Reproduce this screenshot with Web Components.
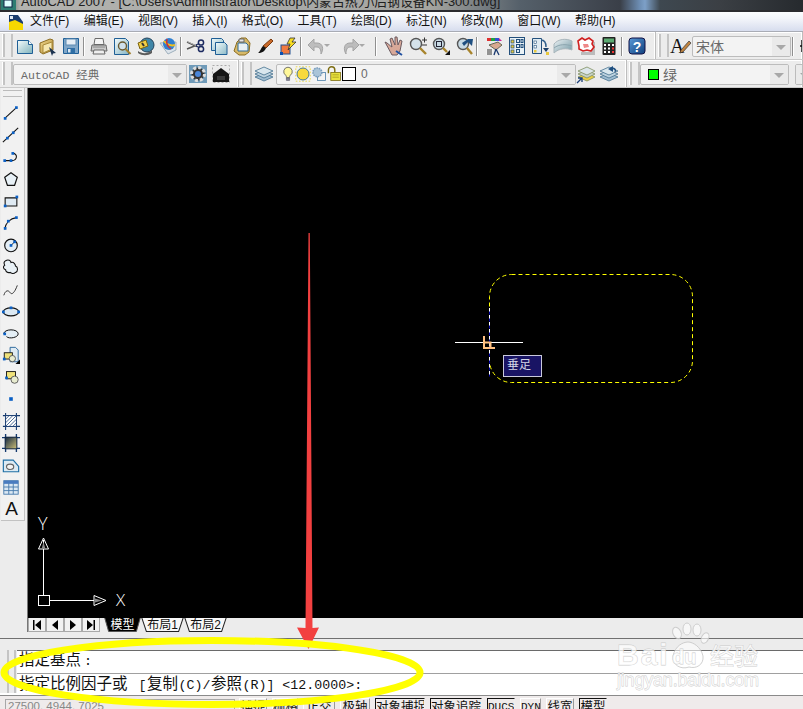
<!doctype html>
<html lang="zh">
<head>
<meta charset="utf-8">
<title>AutoCAD 2007</title>
<style>
  html, body { margin: 0; height: 100%; overflow: hidden; background: #ececec; }
</style>
</head>
<body>
<cad-app>
  <cad-titlebar>AutoCAD 2007 - [C:\Users\Administrator\Desktop\内蒙古热力\后钢设备KN-300.dwg]</cad-titlebar>
  <cad-menubar>
    <span>文件(F)</span><span>编辑(E)</span><span>视图(V)</span><span>插入(I)</span><span>格式(O)</span><span>工具(T)</span><span>绘图(D)</span><span>标注(N)</span><span>修改(M)</span><span>窗口(W)</span><span>帮助(H)</span>
  </cad-menubar>

  <cad-bar-row>
    <cad-toolbar style="width:656px">
      <cad-icon name="new"></cad-icon><cad-icon name="open"></cad-icon><cad-icon name="save"></cad-icon>
      <cad-sep></cad-sep>
      <cad-icon name="print"></cad-icon><cad-icon name="preview"></cad-icon><cad-icon name="publish"></cad-icon><cad-icon name="web"></cad-icon>
      <cad-sep></cad-sep>
      <cad-icon name="cut"></cad-icon><cad-icon name="copy"></cad-icon><cad-icon name="paste"></cad-icon><cad-icon name="brush"></cad-icon><cad-icon name="match"></cad-icon>
      <cad-sep></cad-sep>
      <cad-icon name="undo"></cad-icon><cad-icon name="drop" small></cad-icon><cad-icon name="redo"></cad-icon><cad-icon name="drop" small></cad-icon>
      <cad-sep></cad-sep>
      <cad-icon name="hand" style="margin:0 2px"></cad-icon><cad-icon name="zoomplus"></cad-icon><cad-icon name="zoomwin"></cad-icon><cad-icon name="zoomprev"></cad-icon>
      <cad-sep style="margin-right:5px"></cad-sep>
      <cad-icon name="props"></cad-icon><cad-icon name="center"></cad-icon><cad-icon name="palette"></cad-icon><cad-icon name="sheet"></cad-icon><cad-icon name="markup"></cad-icon><cad-icon name="calc"></cad-icon>
      <cad-sep></cad-sep>
      <cad-icon name="help"></cad-icon>
    </cad-toolbar>
    <cad-toolbar style="flex:1">
      <cad-icon name="textstyle" style="margin-left:-1px"></cad-icon>
      <cad-combo style="width:99px;margin-left:1px"><span style="font-size:14px">宋体</span></cad-combo>
      <cad-sep></cad-sep>
      <cad-icon name="dimstyle"></cad-icon>
    </cad-toolbar>
  </cad-bar-row>

  <cad-bar-row>
    <cad-toolbar style="width:239px">
      <cad-combo style="width:174px"><span style="font:11.5px 'Liberation Mono','Noto Sans CJK SC',monospace;padding-left:4px">AutoCAD 经典</span></cad-combo>
      <cad-icon name="gear" style="margin-left:-1px"></cad-icon><cad-icon name="house"></cad-icon>
    </cad-toolbar>
    <cad-toolbar style="width:388px">
      <cad-icon name="layers"></cad-icon>
      <cad-combo style="width:300px;margin-left:1px">
        <cad-icon name="bulb" tiny></cad-icon><cad-icon name="sun" tiny></cad-icon><cad-icon name="freeze" tiny></cad-icon><cad-icon name="lock" tiny></cad-icon>
        <span style="width:14px;height:14px;box-sizing:border-box;border:1px solid #000;background:#fff;margin:0 5px 0 0"></span>
        <span style="font-size:12px">0</span>
      </cad-combo>
      <cad-icon name="layerset" style="margin-left:-2px"></cad-icon><cad-icon name="layerprev"></cad-icon>
    </cad-toolbar>
    <cad-toolbar style="flex:1">
      <cad-combo style="width:149px">
        <span style="width:11px;height:11px;box-sizing:border-box;border:1px solid #000;background:#00ff00;margin:0 4px 0 4px"></span>
        <span style="font-size:14px">绿</span>
      </cad-combo>
      <cad-combo style="width:20px;margin-left:6px"></cad-combo>
    </cad-toolbar>
  </cad-bar-row>

  <cad-main>
    <cad-draw-tools>
      <cad-icon name="line" tool></cad-icon><cad-icon name="xline" tool></cad-icon><cad-icon name="pline" tool></cad-icon><cad-icon name="polygon" tool></cad-icon><cad-icon name="rect" tool></cad-icon><cad-icon name="arc" tool></cad-icon><cad-icon name="circle" tool></cad-icon><cad-icon name="cloud" tool></cad-icon><cad-icon name="spline" tool></cad-icon><cad-icon name="ellipse" tool></cad-icon><cad-icon name="ellarc" tool></cad-icon><cad-icon name="insert" tool></cad-icon><cad-icon name="block" tool></cad-icon><cad-icon name="point" tool></cad-icon><cad-icon name="hatch" tool></cad-icon><cad-icon name="gradient" tool></cad-icon><cad-icon name="region" tool></cad-icon><cad-icon name="table" tool></cad-icon>
      <span slot="last">A</span>
    </cad-draw-tools>
    <cad-workspace>
      <cad-model-space></cad-model-space>
      <cad-tabs>
        <cad-tab on>模型</cad-tab><cad-tab>布局1</cad-tab><cad-tab>布局2</cad-tab>
      </cad-tabs>
    </cad-workspace>
  </cad-main>

  <cad-command>
    <div><b>指定基点</b>:</div>
    <div><b class="lead">指定比例因子或</b> [<b class="gap">复制</b>(C)/<b class="gap">参照</b>(R)] &lt;12.0000&gt;:</div>
  </cad-command>

  <cad-status>
    <span slot="coords">27500, 4944, 7025</span>
    <cad-toggle style="width:28px">捕捉</cad-toggle>
    <cad-toggle style="width:26px">栅格</cad-toggle>
    <cad-toggle style="width:32px">正交</cad-toggle>
    <cad-toggle style="width:30px">极轴</cad-toggle>
    <cad-toggle on style="width:50px">对象捕捉</cad-toggle>
    <cad-toggle on style="width:52px">对象追踪</cad-toggle>
    <cad-toggle on style="width:28px" mono>DUCS</cad-toggle>
    <cad-toggle style="width:21px" mono>DYN</cad-toggle>
    <cad-toggle style="width:28px">线宽</cad-toggle>
    <cad-toggle on style="width:28px">模型</cad-toggle>
  </cad-status>

  <cad-watermark></cad-watermark>
  <cad-annotations></cad-annotations>
</cad-app>

<script>
const CJK = `"Liberation Sans", "Noto Sans CJK SC", sans-serif`;

// grip square used all over the draw toolbar
const grip = (x, y, s = 3) => `<rect x="${x - s / 2}" y="${y - s / 2}" width="${s}" height="${s}" fill="#0a5fc4"/>`;
const grad = (id, a, b) => `<defs><linearGradient id="${id}" x1="0" y1="0" x2="1" y2="1"><stop offset="0" stop-color="${a}"/><stop offset="1" stop-color="${b}"/></linearGradient></defs>`;

const ICONS = {
  new: grad("g", "#f4fbfb", "#7fb3bd") + `<path d="M2.5 4.5h11l4 4v9h-15z" fill="url(#g)" stroke="#1f5f96"/><path d="M13.5 4.5v4h4" fill="#fff" stroke="#1f5f96"/>`,
  open: grad("g", "#f0d890", "#b08a30") + `<path d="M2 7l10-4 3 1v10L5 18 2 16z" fill="url(#g)" stroke="#8d6d22"/><path d="M5 9l9-3v7l-9 4z" fill="#f6e7b0" stroke="#a98a3a"/><path d="M11 11l7 6-3 .5-1 2.5z" fill="#1c3350"/>`,
  save: `<path d="M2.5 2.5h15v15h-15z" fill="#7fa6c8" stroke="#1f5f96"/><rect x="5" y="3" width="10" height="6" fill="#e6eef5" stroke="#5f8bb2"/><rect x="6" y="12" width="8" height="5.5" fill="#2f6ea5"/><rect x="7" y="13" width="2.5" height="3.5" fill="#dce8f2"/>`,
  print: `<path d="M6 2.5h8l1 6H5z" fill="#f4f4f4" stroke="#6b6b6b"/><path d="M3 9h14l1 6H2z" fill="#c9c9c9" stroke="#666"/><path d="M5 14h10l1 4H4z" fill="#eee" stroke="#666"/><path d="M4 11h12" stroke="#888"/>`,
  preview: grad("g", "#f4fbfb", "#86b5c4") + `<path d="M2.5 2.5h11l3 3v13h-14z" fill="url(#g)" stroke="#1f5f96"/><circle cx="10.5" cy="10" r="4" fill="#cfe0ea" stroke="#6a5a30" stroke-width="1.4"/><path d="M13.5 13l5 5" stroke="#a07f30" stroke-width="2"/>`,
  publish: `<circle cx="12" cy="9" r="7" fill="#3f86a8" stroke="#25435c"/><path d="M3 7l8-3 2 6-8 3z" fill="#f2cf45" stroke="#7a6210"/><path d="M7 7l2 3" stroke="#333" stroke-width="2"/><path d="M3 15c4 3 10 3 14-1v3c-4 3-10 3-14 0z" fill="#5c5c5c"/>`,
  web: `<path d="M2 7l8 11 8-4V6z" fill="#dce3ea" stroke="#9fb0bd"/><circle cx="11" cy="8" r="6" fill="#2f7fd0"/><path d="M6 5c3 4 8 5 11 4" stroke="#f0c020" stroke-width="2" fill="none"/><path d="M9 3c-1 4 1 8 4 10" stroke="#d03030" stroke-width="1.5" fill="none"/>`,
  cut: `<path d="M1 6l10 4.5M1 13l10-4" stroke="#555" stroke-width="1.4"/><path d="M1 5.5l9 4" stroke="#aaa"/><circle cx="15" cy="6.5" r="2.6" fill="none" stroke="#1c2a60" stroke-width="1.5"/><circle cx="15" cy="13" r="2.6" fill="none" stroke="#1c2a60" stroke-width="1.5"/><path d="M10 9l3-1.5M10 10l3 1.5" stroke="#1c2a60" stroke-width="1.2"/>`,
  copy: grad("g", "#f0fafa", "#8dbac8") + `<path d="M2.5 2.5h10l2 2v10h-12z" fill="url(#g)" stroke="#1f5f96"/><path d="M6.5 6.5h9l2.5 2.5v9.5H6.5z" fill="url(#g)" stroke="#1f5f96"/>`,
  paste: `<path d="M5 6L9 2h5l4 5-1 9-4 3H7l-5-4z" fill="#d6b868" stroke="#8c6d20"/><path d="M6 7h8l2 2v6H6z" fill="#e8f1f5" stroke="#2f6a96"/><path d="M7 3h5v3H7z" fill="#e8e8e8" stroke="#666"/>`,
  brush: `<path d="M16 3l2 2-7 7-3-2z" fill="#c96a2a" stroke="#7a3a10"/><path d="M8 10l3 2c-1 3-4 5-8 5 2-1 3-5 5-7z" fill="#111"/>`,
  match: `<rect x="3" y="9" width="9" height="9" fill="#f07a40" stroke="#1f4f90"/><rect x="2" y="16" width="3" height="3" fill="#0a4fb0"/><path d="M12 2h5l-3 4h4l-8 8 2-6H9z" fill="#f8dc20" stroke="#333" stroke-width=".8"/>`,
  undo: `<path d="M15 18c3-5 2-11-4-11H8V3L2 9l6 6v-4h3c3 0 4 3 4 7z" fill="#bdbdbd" stroke="#a5a5a5"/>`,
  redo: `<path d="M5 18c-3-5-2-11 4-11h3V3l6 6-6 6v-4H9c-3 0-4 3-4 7z" fill="#bdbdbd" stroke="#a5a5a5"/>`,
  drop: `<path d="M1 8h6l-3 3z" fill="#a8a8a8"/>`,
  hand: `<path d="M2 6c3 1 5 4 7 5L7 3l2-1 3 7 0-8 2 0 1 8 2-5 2 1-2 10-3 4H9z" fill="#d8a898" stroke="#6a5a60"/><path d="M13 15l6 4" stroke="#2050a0" stroke-width="2"/>`,
  zoomplus: `<circle cx="8" cy="8" r="5.5" fill="#d4e2ea" stroke="#555" stroke-width="1.4"/><path d="M12 12l6 6" stroke="#a8842c" stroke-width="2.4"/><path d="M14 4h5M16.5 1.5v5" stroke="#333"/><path d="M14 9h5" stroke="#333"/>`,
  zoomwin: `<circle cx="8" cy="8" r="5.5" fill="#c8dae4" stroke="#555" stroke-width="1.4"/><rect x="5.5" y="5.5" width="5" height="5" fill="none" stroke="#223"/><path d="M12 12l4 4" stroke="#a8842c" stroke-width="2.4"/><path d="M14 19h5v-5z" fill="#111"/>`,
  zoomprev: `<circle cx="9" cy="8" r="5.5" fill="#c8dae4" stroke="#555" stroke-width="1.4"/><path d="M13 12l5 6" stroke="#a8842c" stroke-width="2.4"/><path d="M14 3h5l-1 7-4-4-4 4-2-3z" fill="#1f4f80"/>`,
  props: `<path d="M3 2h12l3 3H3z" fill="#d02090"/><path d="M3 2h4v3H3z" fill="#e03030"/><path d="M7 2h4v3H7z" fill="#20a040"/><path d="M11 2h4v3h-4z" fill="#3050d0"/><path d="M5 9l9-3 4 3-6 5z" fill="#d8a890" stroke="#665"/><path d="M2 13h7v6H2z" fill="#f2f2f2"/><path d="M3 14h5M3 16h5M3 18h5" stroke="#333"/><path d="M12 13l-2 6M12 13l3 6" stroke="#1c3a70" stroke-width="1.3"/>`,
  center: `<rect x="2.5" y="1.5" width="15" height="17" fill="#eaf2f6" stroke="#24507c"/><g fill="#e8c83c" stroke="#24507c" stroke-width=".7"><rect x="4" y="4" width="3" height="3"/><rect x="4" y="9" width="3" height="3"/><rect x="4" y="14" width="3" height="3"/></g><g fill="#ddeaf2" stroke="#24507c"><rect x="9.5" y="3.5" width="3" height="3"/><rect x="14" y="3.5" width="2" height="3"/><rect x="9.5" y="8.5" width="3" height="3"/><rect x="14" y="8.5" width="2" height="3"/><rect x="9.5" y="13.5" width="3" height="3"/></g>`,
  palette: `<path d="M2.5 2.5h9v15h-9z" fill="#dfeaf1" stroke="#24507c"/><rect x="4" y="5" width="2.5" height="2.5" fill="#fff" stroke="#24507c" stroke-width=".6"/><rect x="4" y="9.5" width="2.5" height="2.5" fill="#fff" stroke="#24507c" stroke-width=".6"/><rect x="4" y="14" width="2.5" height="2.5" fill="#e8c83c"/><path d="M11 4c4 0 5 3 5 7" fill="none" stroke="#2f5e8a" stroke-width="1.5"/><path d="M13 12h6l-3 4z" fill="#1b3f68"/><rect x="16" y="16" width="3" height="3" fill="#e8c83c"/>`,
  sheet: grad("g", "#eef3f5", "#6f96a2") + `<path d="M1 8c4-5 12-6 18-3v9c-5-2-13-2-18 3z" fill="url(#g)" stroke="#a9b6bc"/><path d="M1 12c5-4 12-4 18-2" stroke="#8aa4ae" fill="none"/>`,
  markup: `<path d="M5 16h14v3H5z" fill="#bbb"/><path d="M16 6h3v12h-3z" fill="#bbb"/><path d="M2 5l4-3 3 2 4-2 4 3-1 3 2 3-3 4-4-1-4 1-4-2 0-3z" fill="#fff" stroke="#d02020" stroke-width="1.6"/><path d="M7 8l5 0 1 3-5 1z" fill="#e88"/>`,
  calc: `<rect x="3.5" y="1" width="13" height="18" rx="1" fill="#222"/><rect x="5" y="2.5" width="10" height="4" fill="#5cab72"/><g fill="#fff"><rect x="5" y="8" width="2" height="2"/><rect x="9" y="8" width="2" height="2"/><rect x="13" y="8" width="2" height="2"/><rect x="5" y="11.5" width="2" height="2"/><rect x="9" y="11.5" width="2" height="2"/><rect x="5" y="15" width="2" height="2"/><rect x="9" y="15" width="2" height="2"/></g><rect x="13" y="11.5" width="2" height="2" fill="#e33"/><rect x="13" y="15" width="2" height="2" fill="#e33"/>`,
  help: grad("g", "#5a9ad8", "#0f3f7c") + `<rect x="2" y="2" width="16" height="16" rx="3" fill="url(#g)" stroke="#114"/><text x="10" y="15.5" text-anchor="middle" font-family="Liberation Sans" font-weight="700" font-size="14" fill="#fff">?</text>`,
  textstyle: `<text x="0" y="17" font-family="Liberation Serif" font-size="20" fill="#111">A</text><path d="M19 5l-8 9-1 3 3-1 8-9z" fill="#c08440" stroke="#333" stroke-width=".7"/>`,
  dimstyle: `<path d="M4 4v12M2 10h14l-3-3m3 3l-3 3" stroke="#111" stroke-width="1.5" fill="none"/>`,
  gear: `<rect x="1" y="1" width="18" height="18" fill="#6f9ab8"/><circle cx="10" cy="10" r="6.5" fill="#333"/><circle cx="10" cy="10" r="6.5" fill="none" stroke="#ddd" stroke-dasharray="3 2" stroke-width="3"/><circle cx="10" cy="10" r="3" fill="#4a86d8"/>`,
  house: `<rect x="1.5" y="1.5" width="17" height="17" fill="none" stroke="#aaa" stroke-dasharray="2 2"/><path d="M2 10l8-6 8 6v8H2z" fill="#161616"/><path d="M6 16h8v-4H6z" fill="#3a3a3a"/>`,
  layers: `<g stroke="#44708e" stroke-width=".8"><path d="M1 13l9-4 9 4-9 4z" fill="#9dbbd0"/><path d="M1 10l9-4 9 4-9 4z" fill="#bcd2df"/><path d="M1 7l9-4 9 4-9 4z" fill="#d9e7ee"/></g>`,
  bulb: `<path d="M10 1.5a5.5 5.5 0 0 0-3 10c1 1 1 2 1 3h4c0-1 0-2 1-3a5.5 5.5 0 0 0-3-10z" fill="#fff89a" stroke="#555"/><path d="M8 15h4v3H8z" fill="#889" stroke="#445" stroke-width=".6"/>`,
  sun: `<rect x="1" y="1" width="18" height="18" fill="none" stroke="#e8d020" stroke-dasharray="2 2"/><circle cx="10" cy="10" r="7.5" fill="#f8d93c" stroke="#1f5f96"/>`,
  freeze: `<rect x="8" y="8" width="10" height="10" fill="none" stroke="#4b7fa8"/><circle cx="8" cy="8" r="5.5" fill="#aac4d8" stroke="#7c9fbe" stroke-width="2" stroke-dasharray="2 1"/>`,
  lock: `<path d="M3 9V5a4 4 0 0 1 8 0v3" fill="none" stroke="#7c6c10" stroke-width="1.8"/><rect x="6" y="8" width="12" height="10" fill="#e8e13c" stroke="#7c6c10"/><path d="M8 11h8M8 14h8" stroke="#a89c20"/>`,
  layerset: `<g stroke="#7f8f60" stroke-width=".8"><path d="M2 13l9-4 8 4-8 4z" fill="#eecf40"/><path d="M2 10l9-4 8 4-8 4z" fill="#c8d2c8"/><path d="M2 7l9-4 8 4-8 4z" fill="#dce6ea"/></g><path d="M1 19l5-5m-4 0h4v4" stroke="#1b3f7a" fill="none" stroke-width="1.3"/>`,
  layerprev: `<g stroke="#44708e" stroke-width=".8"><path d="M1 13l9-4 9 4-9 4z" fill="#9dbbd0"/><path d="M1 10l9-4 9 4-9 4z" fill="#bcd2df"/><path d="M1 7l9-4 9 4-9 4z" fill="#d9e7ee"/></g><path d="M14 2v6l-5-3z" fill="#1f4f80"/><path d="M13 4c3 0 4 2 3 4" fill="none" stroke="#1f4f80" stroke-width="1.4"/>`,

  line: `<path d="M3 16L16 4" stroke="#111" stroke-width="1.2"/>` + grip(3.5, 16) + grip(16, 4),
  xline: `<path d="M1 18L18 2" stroke="#111" stroke-width="1.2"/>` + grip(6, 13.5) + grip(12.5, 7.5),
  pline: `<path d="M3 14h8c6 0 7-8 1-8" fill="none" stroke="#111" stroke-width="1.2"/>` + grip(3, 14) + grip(10, 14) + grip(12, 6),
  polygon: `<path d="M10 3l7 5-3 9H6L3 8z" fill="#e8f1f7" stroke="#111" stroke-width="1.3"/>`,
  rect: `<path d="M3.5 6.5h13v9h-13z" fill="#dfeaf3" stroke="#111" stroke-width="1.2"/>` + grip(3.5, 15.5) + grip(16.5, 5.5),
  arc: `<path d="M3 17C4 10 9 5 16 4" fill="none" stroke="#111" stroke-width="1.2"/>` + grip(3.5, 16) + grip(16, 4) + grip(7, 8),
  circle: `<circle cx="10" cy="10.5" r="7" fill="#e4eef6" stroke="#111" stroke-width="1.3"/><path d="M10 10.5l4-4" stroke="#111"/>` + grip(10, 10.5) + grip(14, 6.5),
  cloud: `<path d="M4 3c3-2 6 0 6 2 3-1 5 2 5 4 3 1 3 6 0 7-2 2-5 1-6 0-3 1-5-1-5-3-3-1-3-4-1-5-1-2-1-4 1-5z" fill="#e9f1f6" stroke="#111" stroke-width="1.2"/>`,
  spline: `<path d="M2 17c2-6 5-6 7-3s5 0 8-8" fill="none" stroke="#333" stroke-width="1.1"/>`,
  ellipse: `<ellipse cx="10" cy="11" rx="8.5" ry="4.5" fill="#dce9f3" stroke="#111" stroke-width="1.3"/>` + grip(10, 6.5) + grip(1.5, 11) + grip(18.5, 11),
  ellarc: `<path d="M2 11c0-6 16-6 16 0 0 4-10 6-13 3" fill="#e4eef5" stroke="#111" stroke-width="1.1"/>` + grip(3, 11),
  insert: `<path d="M9 1.5h6l3 3v13H9z" fill="#dfeaf2" stroke="#1f5f96"/><rect x="2.5" y="7.5" width="9" height="7" fill="#f0e27a" stroke="#111"/><circle cx="11.5" cy="14" r="3.5" fill="#e8ecd0" stroke="#555"/>` + grip(2.5, 14.5) + `<path d="M15 20h5v-5z" fill="#000"/>`,
  block: `<rect x="5" y="4" width="10" height="8" fill="#f0e27a" stroke="#111"/><circle cx="14" cy="13" r="4" fill="#e8ecd0" stroke="#555"/>` + grip(5, 11),
  point: grip(10, 10, 4),
  hatch: `<path d="M4 1v19M16 1v19M1 4h19M1 16h19" stroke="#14396e" stroke-width="1.2"/><rect x="4" y="4" width="12" height="12" fill="#fff"/><path d="M4 8l4-4M4 12l8-8M4 16L16 4M8 16l8-8M12 16l4-4" stroke="#3c5f8a"/><rect x="4" y="4" width="12" height="12" fill="none" stroke="#14396e"/>`,
  gradient: grad("g", "#12263f", "#cfc178") + `<path d="M4 0v20M16 0v20M0 4h20M0 16h20" stroke="#14396e" stroke-width="1.5"/><rect x="3.5" y="3.5" width="13" height="13" fill="url(#g)" stroke="#0f2440"/>`,
  region: `<path d="M1.5 4.5h11l6 7v6h-17z" fill="#dceaf3" stroke="#1f6fa5" stroke-width="1.3"/><ellipse cx="9" cy="12" rx="4" ry="3" fill="#f3f3f3" stroke="#666" stroke-width="1.3"/>`,
  table: `<rect x="2" y="3" width="16" height="15" fill="#dbe8f3" stroke="#4679ac"/><rect x="2" y="3" width="16" height="3.5" fill="#4a7cc0"/><path d="M2 10h16M2 14h16M7.5 6v12M12.5 6v12" stroke="#4679ac"/>`
};

function define(tag, css, html, extra) {
  const tpl = document.createElement("template");
  tpl.innerHTML = `<style>${css}</style>${html}`;
  customElements.define(tag, class extends HTMLElement {
    constructor() {
      super();
      this.attachShadow({ mode: "open" }).appendChild(tpl.content.cloneNode(true));
    }
    connectedCallback() { if (extra) extra(this); }
  });
}

define("cad-app",
  `:host { display:flex; flex-direction:column; position:relative; width:803px; height:709px; overflow:hidden; background:#ececec; font-family:${CJK}; }
   ::slotted(*) { flex:none; }`,
  `<slot></slot>`);

define("cad-titlebar",
  `:host { display:block; height:12px; box-sizing:border-box; overflow:hidden; position:relative; border-bottom:2px solid #2c2c30;
     background:linear-gradient(90deg,#3e5a55 0 4px,#b3b3af 20px,#a8a9a7 300px,#a5a5a0 430px,#55606a 520px,#3a3f48 620px,#6e8fb5 640px,#7da0c8 645px,#3e4850 660px,#3b3f44 720px,#262a2e 803px); }
   .app { position:absolute; left:1px; top:-3px; }
   .t { position:absolute; left:21px; top:-7px; font:12.9px/17px ${CJK}; color:#202020; white-space:nowrap; }`,
  `<svg class="app" width="15" height="13" viewBox="0 0 15 13"><rect width="15" height="13" fill="#2d7d72"/><rect x="3" y="3" width="8" height="7" fill="#dff" stroke="#124"/></svg><div class="t"><slot></slot></div>`);

define("cad-menubar",
  `:host { display:flex; align-items:center; height:20px; box-sizing:border-box; padding-left:8px; border-bottom:1px solid #a9acb5;
     background:linear-gradient(#fcfdfe,#f3f5fa 35%,#d7ddee); font:12px/19px ${CJK}; color:#111; }
   svg { flex:none; width:16px; height:18px; margin-right:6px; }
   ::slotted(span) { flex:none; margin-right:14.3px; }`,
  `<svg viewBox="0 0 16 18"><path d="M1 2h9l5 7v8H1z" fill="#1b3c6e"/><path d="M1 9l6-2 8 4v6H1z" fill="#f6d800"/><path d="M2 3h3v3H2z" fill="#dfe8f2"/></svg><slot></slot>`);

define("cad-bar-row",
  `:host { display:flex; height:28px; box-sizing:border-box; border-bottom:1px solid #c9c9c9; box-shadow:inset 0 1px 0 #fff; background:#ececec; overflow:hidden; }`,
  `<slot></slot>`);

define("cad-toolbar",
  `:host { display:flex; align-items:center; flex:none; box-sizing:border-box; height:27px; padding:1px 0 0 13px; position:relative; border-right:1px solid #bdbdbd; box-shadow:inset -1px 0 0 #fff; white-space:nowrap; overflow:hidden; }
   .grip { position:absolute; left:3px; top:2px; bottom:2px; width:6px; border-left:2px solid #c4c4c4; border-right:2px solid #c4c4c4; box-shadow:-1px 0 0 #fff; }`,
  `<div class="grip"></div><slot></slot>`);

define("cad-sep",
  `:host { display:block; flex:none; width:1px; height:19px; margin:0 3px 0 1px; background:#8f8f8f; box-shadow:1px 0 0 #fff; }`,
  ``);

define("cad-icon",
  `:host { display:flex; align-items:center; justify-content:center; flex:none; width:23px; height:24px; }
   :host([small]) { width:12px; }
   :host([tiny]) { width:15.5px; }
   :host([tool]) { width:23px; height:22px; }
   span { display:block; }
   svg { width:20px; height:20px; display:block; overflow:visible; }
   :host([tool]) svg { width:18px; height:18px; }
   :host([tiny]) svg { width:16px; height:16px; }`,
  `<span id="i"></span>`,
  el => {
    const name = el.getAttribute("name");
    el.shadowRoot.getElementById("i").innerHTML = `<svg viewBox="0 0 20 20" aria-hidden="true">${ICONS[name] || ""}</svg>`;
  });

define("cad-combo",
  `:host { display:flex; align-items:center; flex:none; height:21px; box-sizing:border-box; border:1px solid #bcbcbc; border-radius:2px; background:#f3f3f3; position:relative; padding-left:3px; color:#6a6a6a; font:13px ${CJK}; overflow:hidden; }
   .arrow { position:absolute; right:0; top:0; bottom:0; width:18px; background:#eaeaea; }
   .arrow::after { content:""; position:absolute; left:4px; top:8px; border:5px solid transparent; border-top:5px solid #a8a8a8; border-bottom:0; }
   ::slotted(*) { flex:none; }`,
  `<slot></slot><div class="arrow"></div>`);

define("cad-main",
  `:host { display:flex; height:544px; background:#ececec; }`,
  `<slot></slot>`);

define("cad-draw-tools",
  `:host { display:flex; flex-direction:column; align-items:center; flex:none; width:27px; box-sizing:border-box; }
   .box { width:24px; box-sizing:border-box; margin-left:-2px; padding-top:8px; background:#f1f1f1; border-right:1px solid #c2c2c2; border-bottom:1px solid #c2c2c2; }
   .grip { height:5px; margin:-6px 2px 5px; border-top:1px solid #bbb; border-bottom:1px solid #bbb; }
   .col { display:flex; flex-direction:column; margin-left:-1px; }
   .a { display:block; text-align:center; margin-left:-1px; height:22px; font:19px/22px "Liberation Sans",sans-serif; color:#111; }
   .a ::slotted(span) { display:block; }`,
  `<div class="box"><div class="grip"></div><div class="col"><slot></slot></div><div class="a"><slot name="last"></slot></div></div>`);

define("cad-workspace",
  `:host { display:flex; flex-direction:column; flex:1; min-width:0; border-left:1px solid #777; }`,
  `<slot></slot>`);

define("cad-model-space",
  `:host { display:block; position:relative; height:530px; background:#000; overflow:hidden; }
   svg { position:absolute; left:-28px; top:-88px; width:803px; height:709px; }
   .tip { position:absolute; left:475px; top:267px; width:39px; height:22px; box-sizing:border-box; border:1px solid #c9c9dc; background:#191464; color:#d2d6e6; font:12px/19px ${CJK}; padding-left:3px; }`,
  `<svg viewBox="0 0 803 709">
     <rect x="489.5" y="274.5" width="203" height="108" rx="22" fill="none" stroke="#ffff00" stroke-dasharray="4 3"/>
     <path d="M489.5 308v67" stroke="#fff" stroke-dasharray="4 3"/>
     <path d="M489.5 311.5v65" stroke="#0000b0" stroke-dasharray="3 4"/>
     <path d="M455 342.5h68" stroke="#fff"/>
     <path d="M484 336v12h11M484.5 342.5h6v5" fill="none" stroke="#ffc080" stroke-width="2"/>
     <g fill="none" stroke="#fff">
       <rect x="38.5" y="595.5" width="11" height="10"/>
       <path d="M43.5 595V540M50 600.5h44"/>
       <path d="M43.5 538l-5 11h10zM106 600.5l-12-5v10z"/>
     </g>
     <path d="M43.5 542l-2 7h4zM102 600.5l-7-2v4z" fill="#888"/>
     <text x="38" y="530" font-family="Open Sans" font-weight="300" font-size="18" fill="#fff">Y</text>
     <text x="116" y="606" font-family="Open Sans" font-weight="300" font-size="17" fill="#fff">X</text>
   </svg>
   <div class="tip">垂足</div>`);

define("cad-tabs",
  `:host { display:flex; align-items:stretch; height:14px; background:#ececec; color:#111; }
   .nav { display:flex; flex:none; width:72px; margin-right:4px; }
   .nav button { flex:1; padding:0; margin:0; border:1px solid #a9a9a9; border-top:0; background:#f1f1f1; display:flex; align-items:center; justify-content:center; }
   .nav svg { width:12px; height:12px; display:block; }
   .tabs { display:flex; }`,
  `<div class="nav">
     <button><svg viewBox="0 0 12 12"><path d="M2 1h1.5v10H2zM10 1v10L4 6z"/></svg></button>
     <button><svg viewBox="0 0 12 12"><path d="M9 1v10L3 6z"/></svg></button>
     <button><svg viewBox="0 0 12 12"><path d="M3 1v10l6-5z"/></svg></button>
     <button><svg viewBox="0 0 12 12"><path d="M10 1H8.5v10H10zM2 1v10l6-5z"/></svg></button>
   </div><div class="tabs"><slot></slot></div>`);

define("cad-tab",
  `:host { display:block; position:relative; width:43px; height:14px; text-align:center; font:12px/14px ${CJK}; color:#111; }
   :host([on]) { width:37px; color:#fff; }
   svg { position:absolute; inset:0; width:100%; height:100%; display:block; }
   polygon { fill:#f8f8f8; stroke:#222; vector-effect:non-scaling-stroke; }
   :host([on]) polygon { fill:#000; stroke:#555; }
   span { position:relative; }`,
  `<svg viewBox="0 0 40 14" preserveAspectRatio="none"><polygon points="0.5,-1 39.5,-1 35,13.5 5,13.5"/></svg><span><slot></slot></span>`);

define("cad-command",
  `:host { display:flex; flex-direction:column; height:61px; box-sizing:border-box; padding:18px 0 0 17px; position:relative; background:#ececec; }
   :host::before { content:""; position:absolute; left:0; right:0; top:6px; border-top:1px solid #707070; }
   .grip { position:absolute; left:7px; top:18px; width:5px; height:43px; border-left:2px solid #c4c4c4; border-right:2px solid #c4c4c4; }
   .box { background:#fff; border-top:1px solid #6a6a6a; height:43px; box-sizing:border-box; font:13.3px/14px "Liberation Mono","Noto Sans CJK SC",monospace; color:#111; white-space:nowrap; padding-left:2px; overflow:hidden; }
   ::slotted(div) { height:22px; }
   ::slotted(div:last-child) { border-top:1px solid #a0a0a0; margin-left:-2px; padding:1px 0 0 2px; }`,
  `<div class="grip"></div><div class="box"><slot></slot></div>`,
  el => {
    // the command font draws its CJK glyphs wider than the latin cell
    el.querySelectorAll("b").forEach(b => {
      b.style.cssText = "font-weight:400;font-size:15.5px;font-family:'Noto Sans CJK SC',sans-serif;";
      if (b.className === "gap") b.style.margin = "0 .5px";
      else b.style.marginRight = "3px";
    });
  });

define("cad-status",
  `:host { display:flex; align-items:flex-start; height:14px; box-sizing:border-box; margin-top:2px; padding:3px 0 0 5px; gap:5px; background:#efebeb; border-top:1px solid #8a8a8a; box-shadow:0 -2px 0 #fff,0 -3px 0 #c8c8c8; overflow:hidden; }
   .coords { flex:none; width:230px; height:16px; margin-right:-1px; box-sizing:border-box; border:1px solid #a8a8a8; padding-left:2px; font:11.5px/13px "Liberation Sans",sans-serif; color:#888; }`,
  `<div class="coords"><slot name="coords"></slot></div><slot></slot>`);

define("cad-toggle",
  `:host { display:block; flex:none; height:16px; box-sizing:border-box; margin-top:-1px; text-align:center; font:12.5px/16px ${CJK}; color:#111; white-space:nowrap; overflow:hidden; border:1px solid; border-color:#fff #999 #999 #fff; }
   :host([on]) { border-color:#111 #eee #eee #111; }
   :host([mono]) { font:11px/16px "Liberation Mono",monospace; }`,
  `<slot></slot>`);

define("cad-watermark",
  `:host { position:absolute; left:612px; top:618px; width:150px; height:75px; pointer-events:none; }
   svg { width:150px; height:75px; display:block; overflow:visible; }
   text { fill:rgba(255,255,255,.72); stroke:rgba(196,196,196,.85); stroke-width:.8px; paint-order:stroke; }`,
  `<svg viewBox="0 0 150 75">
     <g fill="rgba(255,255,255,.6)" stroke="rgba(196,196,196,.8)" transform="translate(3 2)">
       <ellipse cx="62" cy="13" rx="4" ry="6" transform="rotate(-25 62 13)"/>
       <ellipse cx="72" cy="9" rx="4" ry="6"/>
       <ellipse cx="82" cy="10" rx="4" ry="6"/>
       <ellipse cx="90" cy="18" rx="3.5" ry="5.5" transform="rotate(25 90 18)"/>
       <path d="M58 36c2-10 10-14 15-14s13 5 15 14c1 9-7 13-14 11-8 3-17-2-16-11z"/>
     </g>
     <text x="5" y="47" font-family="Liberation Sans" font-weight="700" font-size="30" letter-spacing="2">Bai</text>
     <text x="60" y="46" font-family="Liberation Sans" font-weight="700" font-size="20">du</text>
     <text x="98" y="47" font-family="Noto Sans CJK SC" font-size="24">经验</text>
     <text x="5" y="68" font-family="Liberation Sans" font-size="18" textLength="142">jingyan.baidu.com</text>
   </svg>`);

define("cad-annotations",
  `:host { position:absolute; left:0; top:0; width:803px; height:709px; pointer-events:none; }
   svg { display:block; width:803px; height:709px; }`,
  `<svg viewBox="0 0 803 709">
     <polygon points="308.5,233 309.8,233 312.5,628 319,627.5 308.5,649 297,627.5 305.5,628" fill="#f24040"/>
     <ellipse cx="212" cy="672.5" rx="208" ry="32" fill="none" stroke="#ffff00" stroke-width="7"/>
   </svg>`);
</script>
</body>
</html>
